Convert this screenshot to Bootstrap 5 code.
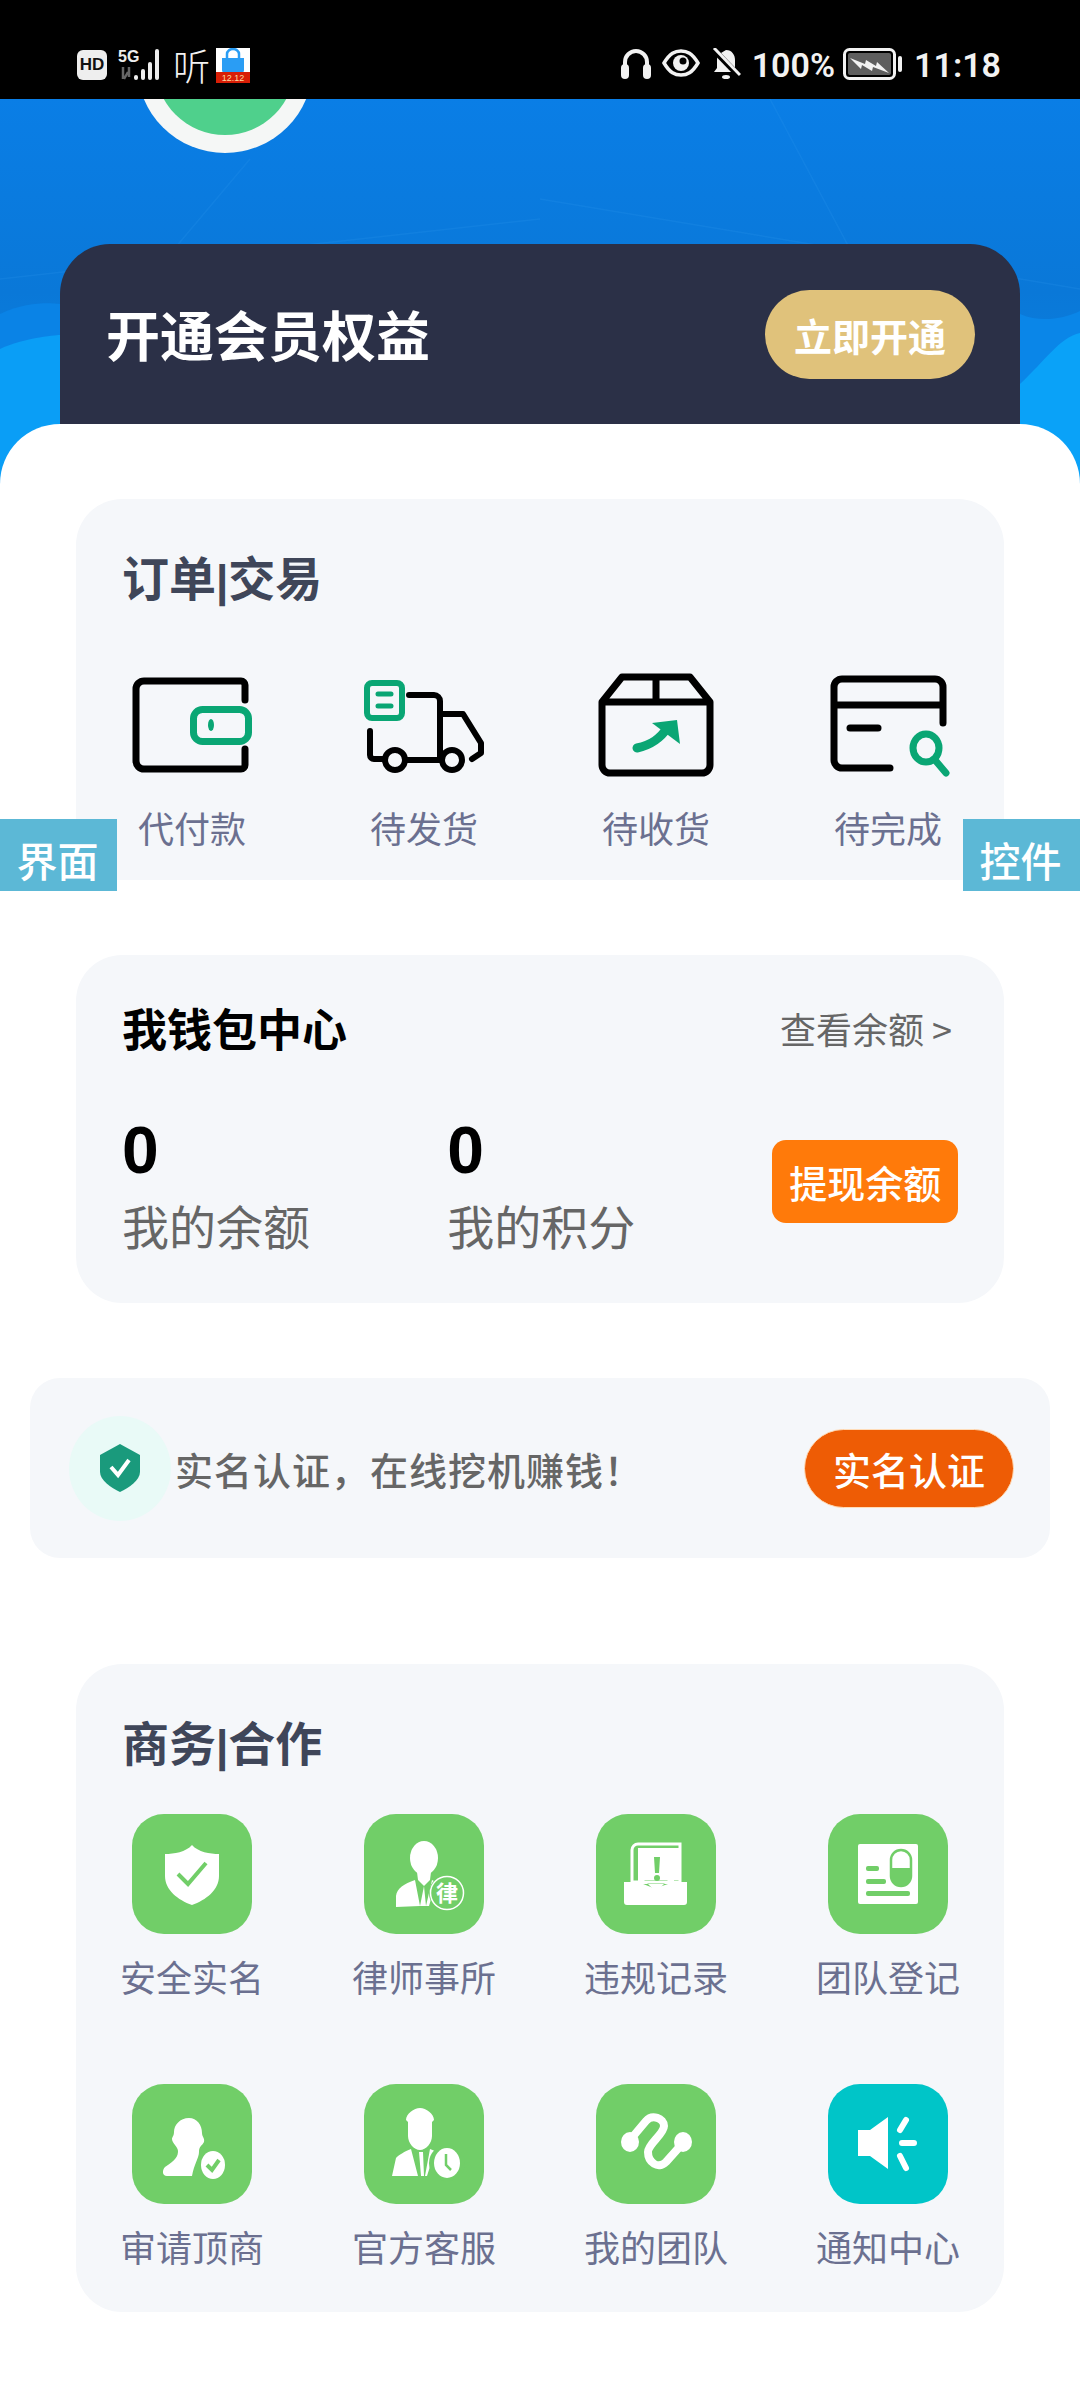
<!DOCTYPE html>
<html lang="zh-CN">
<head>
    <meta charset="UTF-8">
    <meta name="viewport" content="width=device-width, initial-scale=1.0">
    <title>会员中心</title>
    <link href="https://cdn.jsdelivr.net/npm/bootstrap@5.3.0/dist/css/bootstrap.min.css" rel="stylesheet">
    <style>
        body {
            width: 1080px;
            height: 2388px;
            overflow: hidden;
            position: relative;
            background: #fff;
            font-family: "Noto Sans CJK SC", "Noto Sans", sans-serif;
        }
        .status-bar {
            height: 99px;
            background: #000;
            color: #f2f2f2;
            padding: 48px 79px 0 77px;
            position: relative;
            z-index: 3;
        }
        .status-bar svg { display: block; }
        .hd-box {
            width: 30px; height: 30px; margin-top: 2px;
            background: #eee; color: #111; border-radius: 6px;
            font: 700 17px/30px "Liberation Sans", sans-serif; text-align: center;
        }
        .ting { font-size: 37px; line-height: 34px; font-weight: 300; margin-left: 8px; margin-right: 6px; }
        .status-num { font: 600 34px/32px Roboto, sans-serif; margin-top: 1px; }
        .st-gap { margin-left: 11px; }
        .hero {
            height: 385px;
            margin-bottom: -60px;
            padding: 145px 60px 0;
            position: relative;
            overflow: hidden;
            background: linear-gradient(180deg, #0a7ee6 0%, #0a78d8 50%, #0a86e4 100%);
        }
        .hero-bg { position: absolute; left: 0; top: 0; }
        .hero-avatar { position: absolute; left: 137px; top: -34px; }
        .vip-card {
            height: 260px;
            position: relative;
            background: #2b3047;
            border-radius: 50px 50px 0 0;
            padding: 46px 45px 0 46px;
        }
        .vip-title { font-size: 54px; line-height: 88px; font-weight: 700; color: #fff; }
        .btn.vip-btn {
            width: 210px; height: 89px; padding: 0;
            border: 0; border-radius: 45px;
            background: #e0c27b; color: #fff;
            font-size: 38px; font-weight: 700;
        }
        .sheet {
            height: 1964px;
            background: #fff;
            border-radius: 60px 60px 0 0;
            padding: 75px 76px 0;
            position: relative;
            z-index: 2;
        }
        .panel { background: #f5f7fa; border-radius: 46px; }
        .order-panel { height: 381px; padding-top: 47px; margin-bottom: 75px; border-radius: 46px 46px 12px 12px; }
        .panel-title { font-size: 47px; line-height: 60px; font-weight: 700; color: #3f4659; padding-left: 46px; }
        .title-bar { font-family: "Liberation Sans", sans-serif; font-weight: 700; font-size: 44px; }
        .order-row { margin-top: 62px; }
        .cell-label { font-size: 36px; color: #6b7090; line-height: 50px; }
        .order-label { margin-top: 25px; }
        .cell svg { display: block; margin: 0 auto; overflow: visible; }
        .wallet-panel { height: 348px; padding: 43px 46px 0; margin-bottom: 75px; }
        .wallet-title { font-size: 45px; line-height: 60px; font-weight: 700; color: #000; }
        .wallet-link { font-size: 36px; line-height: 60px; color: #666; margin-right: -2px; }
        .wallet-stats { margin-top: 54px; }
        .wallet-num { font-size: 66px; line-height: 76px; font-weight: 700; color: #000; font-family: "Liberation Sans", sans-serif; }
        .wallet-sub { font-size: 47px; line-height: 60px; color: #666; margin-top: 7px; }
        .wallet-stat { width: 326px; }
        .btn.cash-btn {
            width: 186px; height: 83px; padding: 0; margin-top: 28px;
            border: 0; border-radius: 14px;
            background: #ff7a0a; color: #fff;
            font-size: 38px; font-weight: 500;
        }
        .real-panel {
            height: 180px;
            margin: 0 -46px 106px;
            border-radius: 30px;
            padding: 0 36px 0 39px;
        }
        .shield-dot { width: 102px; height: 105px; border-radius: 50%; background: #e9faf7; flex-shrink: 0; }
        .real-text { font-size: 38px; color: #666; margin-left: 4px; font-weight: 500; letter-spacing: 1px; }
        .btn.real-btn {
            width: 210px; height: 79px; padding: 0;
            border: 1px solid #ffdcb8; border-radius: 40px;
            background: #ee5c05; color: #fff;
            font-size: 38px; font-weight: 500;
        }
        .biz-panel { height: 648px; padding-top: 47px; }
        .biz-row { margin-top: 38px; }
        .biz-row + .biz-row { margin-top: 81px; }
        .tile {
            width: 120px; height: 120px;
            margin: 0 auto 17px;
            border-radius: 32px;
            background: #71ce68;
        }
        .tile.tile-teal { background: #00c5c8; }
        .biz-row .cell-label { margin-bottom: 2px; }
        .side-tag {
            position: absolute; top: 819px; z-index: 4;
            width: 117px; height: 72px;
            background: #5cb8d6; color: #fff;
            font-size: 41px; font-weight: 500; line-height: 80px; text-align: center;
            padding-right: 2px;
        }
        .tag-left { left: 0; }
        .tag-right { right: 0; }
    </style>
</head>
<body>

    <div class="status-bar d-flex justify-content-between">
        <div class="d-flex align-items-start">
            <div class="hd-box">HD</div>
            <svg width="50" height="34" viewBox="0 0 50 34" class="ms-2">
                <text x="3" y="14" font-family="Liberation Sans" font-size="16" font-weight="700" fill="#eee">5G</text>
                <path d="M8 19v12M13 24l-4 7M14 19v10" stroke="#666" stroke-width="2.500" fill="none"/>
                <g fill="#eee">
                    <rect x="19" y="27" width="4" height="5" rx="2"/>
                    <rect x="26" y="21" width="4" height="11" rx="2"/>
                    <rect x="33" y="14" width="4" height="18" rx="2"/>
                    <rect x="40" y="1" width="4" height="31" rx="2"/>
                </g>
            </svg>
            <div class="ting">听</div>
            <svg width="34" height="35" viewBox="0 0 34 35">
                <rect width="34" height="25" fill="#fff"/>
                <path d="M6 10h22v12a3 3 0 0 1-3 3H9a3 3 0 0 1-3-3z" fill="#2a9df4"/>
                <path d="M11 10V6a6 5 0 0 1 12 0v4" stroke="#2a9df4" stroke-width="2.500" fill="none"/>
                <rect y="24" width="34" height="11" fill="#d81e06"/>
                <text x="17" y="33" font-family="Liberation Sans" font-size="9" fill="#ffd9a0" text-anchor="middle">12.12</text>
            </svg>
        </div>
        <div class="d-flex align-items-start">
            <svg width="30" height="31" viewBox="0 0 30 31">
                <path d="M4 20V14a11 11 0 0 1 22 0v6" stroke="#f2f2f2" stroke-width="4" fill="none"/>
                <rect x="0" y="16" width="8" height="15" rx="4" fill="#f2f2f2"/>
                <rect x="22" y="16" width="8" height="15" rx="4" fill="#f2f2f2"/>
            </svg>
            <svg width="38" height="30" viewBox="0 0 38 30" class="st-gap">
                <path d="M2 15C8 5 13 3 19 3s11 2 17 12c-6 10-11 12-17 12S8 25 2 15z" stroke="#f2f2f2" stroke-width="3.500" fill="none"/>
                <circle cx="19" cy="15" r="8" fill="#f2f2f2"/>
                <circle cx="21" cy="13" r="3.500" fill="#000"/>
            </svg>
            <svg width="30" height="32" viewBox="0 0 30 32" class="st-gap">
                <path d="M15 2c6 0 9 5 9 10v8l3 4H3l3-4v-8c0-2 .6-4 1.500-5.500z" fill="#f2f2f2"/>
                <path d="M2 1l26 27" stroke="#000" stroke-width="6"/>
                <path d="M3 0l26 27" stroke="#f2f2f2" stroke-width="3"/>
                <ellipse cx="15" cy="29" rx="4" ry="2" fill="#f2f2f2"/>
            </svg>
            <div class="status-num st-gap">100%</div>
            <svg width="60" height="32" viewBox="0 0 60 32" class="ms-2">
                <rect x="1.500" y="1.500" width="50" height="29" rx="5" stroke="#f2f2f2" stroke-width="3" fill="none"/>
                <rect x="5" y="5" width="43" height="22" rx="2" fill="#5e5e5e"/>
                <path d="M7 10l15 6 1-4 10 6 1-4 12 11-16-6-1 4-10-6-1 4z" fill="#f2f2f2"/>
                <rect x="55" y="8" width="4" height="16" rx="2" fill="#f2f2f2"/>
            </svg>
            <div class="status-num st-gap">11:18</div>
        </div>
    </div>

    <div class="hero">
        <svg class="hero-bg" width="1080" height="385" viewBox="0 0 1080 385">
            <g stroke="#2f97ec" stroke-width="1.500" fill="none" opacity=".22">
                <path d="M250 60L90 250M770 0L900 244M540 100L1080 190M0 180L540 120"/>
            </g>
            <path d="M0 215C30 200 60 205 60 205V385H0z" fill="#0a83e6"/>
            <path d="M0 250C25 238 60 236 60 236V385H0z" fill="#0a9ef6"/>
            <path d="M1020 215C1050 228 1080 212 1080 212V385H1020z" fill="#0a86e8"/>
            <path d="M1020 285C1045 262 1060 238 1080 234V385H1020z" fill="#0aa2f8"/>
        </svg>
        <svg class="hero-avatar" width="176" height="90" viewBox="0 0 176 90" >
            <circle cx="88" cy="0" r="88" fill="#f5f7f6"/>
            <circle cx="88" cy="0" r="70" fill="#4fd08c"/>
            <path d="M55 0h66v3h-4v8h-14v-4H73v4H59V3h-4z" fill="#fff"/>
        </svg>
        <div class="vip-card d-flex justify-content-between align-items-start">
            <div class="vip-title">开通会员权益</div>
            <button class="btn vip-btn">立即开通</button>
        </div>
    </div>

    <div class="sheet">
        <div class="panel order-panel">
            <div class="panel-title">订单<span class="title-bar">|</span>交易</div>
            <div class="row g-0 order-row text-center">
                <div class="col-3 cell">
                    <svg width="120" height="104" viewBox="0 0 120 104" fill="none">
                        <path d="M113 27V12a4 4 0 0 0-4-4H12a8 8 0 0 0-8 8v72a8 8 0 0 0 8 8h97a4 4 0 0 0 4-4V76" stroke="#000" stroke-width="7" stroke-linecap="round"/>
                        <rect x="61.500" y="36.500" width="55" height="32" rx="9" stroke="#0aa674" stroke-width="7"/>
                        <ellipse cx="79" cy="52" rx="3" ry="6" fill="#0aa674"/>
                    </svg>
                    <div class="cell-label order-label">代付款</div>
                </div>
                <div class="col-3 cell">
                    <svg width="120" height="104" viewBox="0 0 120 104" fill="none">
                        <path d="M45 22H70a6 6 0 0 1 6 6V86M6 58V82a4 4 0 0 0 4 4H20M41 87H78M76 41H99L117 70V80L108 86" stroke="#000" stroke-width="6" stroke-linecap="round" stroke-linejoin="round"/>
                        <circle cx="31" cy="87" r="10" stroke="#000" stroke-width="6"/>
                        <circle cx="88" cy="87" r="10" stroke="#000" stroke-width="6"/>
                        <rect x="3" y="10" width="35" height="35" rx="5" stroke="#0aa674" stroke-width="6"/>
                        <path d="M14 21H27M14 33H27" stroke="#0aa674" stroke-width="5" stroke-linecap="round"/>
                    </svg>
                    <div class="cell-label order-label">待发货</div>
                </div>
                <div class="col-3 cell">
                    <svg width="120" height="104" viewBox="0 0 120 104" fill="none">
                        <path d="M6 29V92a8 8 0 0 0 8 8H106a8 8 0 0 0 8-8V29L94 4H26zM6 29H114M60 4V29" stroke="#000" stroke-width="7" stroke-linejoin="round"/>
                        <path d="M41 75C55 72 64 66 72 54" stroke="#0aa674" stroke-width="9" stroke-linecap="round"/>
                        <path d="M56 50L81 47L84 71z" fill="#0aa674"/>
                    </svg>
                    <div class="cell-label order-label">待收货</div>
                </div>
                <div class="col-3 cell">
                    <svg width="120" height="104" viewBox="0 0 120 104" fill="none">
                        <path d="M115 50V14a8 8 0 0 0-8-8H14a8 8 0 0 0-8 8V87a8 8 0 0 0 8 8H62M6 32H115" stroke="#000" stroke-width="7" stroke-linecap="round"/>
                        <path d="M22 55H50" stroke="#000" stroke-width="7" stroke-linecap="round"/>
                        <ellipse cx="98" cy="75" rx="13" ry="14" stroke="#0aa674" stroke-width="7"/>
                        <path d="M107 87L118 100" stroke="#0aa674" stroke-width="7" stroke-linecap="round"/>
                    </svg>
                    <div class="cell-label order-label">待完成</div>
                </div>
            </div>
        </div>

        <div class="panel wallet-panel">
            <div class="d-flex justify-content-between">
                <div class="wallet-title">我钱包中心</div>
                <div class="wallet-link pe-2">查看余额 &gt;</div>
            </div>
            <div class="d-flex wallet-stats">
                <div class="wallet-stat">
                    <div class="wallet-num">0</div>
                    <div class="wallet-sub">我的余额</div>
                </div>
                <div class="wallet-stat">
                    <div class="wallet-num">0</div>
                    <div class="wallet-sub">我的积分</div>
                </div>
                <button class="btn cash-btn">提现余额</button>
            </div>
        </div>

        <div class="panel real-panel d-flex align-items-center">
            <div class="shield-dot d-flex align-items-center justify-content-center">
                <svg width="42" height="48" viewBox="0 0 42 48">
                    <path d="M21 0L41 11V28C41 36 30 44 21 48C12 44 1 36 1 28V11z" fill="#1a9a7c"/>
                    <path d="M12 23L19 31L30 16" stroke="#fff" stroke-width="4" fill="none"/>
                </svg>
            </div>
            <div class="real-text flex-grow-1">实名认证，在线挖机赚钱！</div>
            <button class="btn real-btn">实名认证</button>
        </div>

        <div class="panel biz-panel">
            <div class="panel-title">商务<span class="title-bar">|</span>合作</div>
            <div class="row g-0 biz-row text-center">
                <div class="col-3 cell">
                    <div class="tile d-flex">
                        <svg width="120" height="120" viewBox="0 0 120 120">
                            <path d="M60 31C66 38 78 40 87 40V62C87 76 74 86 60 91C46 86 33 76 33 62V40C42 40 54 38 60 31z" fill="#fff"/>
                            <path d="M46 60L56 70L74 49" stroke="#71ce68" stroke-width="4" fill="none"/>
                        </svg>
                    </div>
                    <div class="cell-label">安全实名</div>
                </div>
                <div class="col-3 cell">
                    <div class="tile d-flex">
                        <svg width="120" height="120" viewBox="0 0 120 120">
                            <ellipse cx="60" cy="44" rx="14" ry="17" fill="#fff"/>
                            <path d="M53 58H67L66 66L60 72L54 66z" fill="#fff"/>
                            <path d="M32 93V82C33 74 40 70 51 66L56 92zM60 72L62 92H56zM68 66L72 68L65 92H62z" fill="#fff"/>
                            <circle cx="83" cy="79" r="18" fill="#71ce68"/>
                            <circle cx="83" cy="79" r="16.500" fill="none" stroke="#fff" stroke-width="1.500"/>
                            <text x="83" y="87" font-size="22" font-weight="700" fill="#fff" text-anchor="middle" font-family="Noto Sans CJK SC">律</text>
                        </svg>
                    </div>
                    <div class="cell-label">律师事所</div>
                </div>
                <div class="col-3 cell">
                    <div class="tile d-flex">
                        <svg width="120" height="120" viewBox="0 0 120 120">
                            <path d="M36 62V36a6 6 0 0 1 6-6H84V68H36z" fill="none" stroke="#fff" stroke-width="3"/>
                            <path d="M42 34H84V66H42z" fill="#fff"/>
                            <path d="M28 68H42L60 75L60 74L78 68H91V88a3 3 0 0 1-3 3H31a3 3 0 0 1-3-3z" fill="#fff"/>
                            <path d="M42 60L60 78L78 60V70H42z" fill="#fff"/>
                            <path d="M58 43H64L63 59H59z" fill="#71ce68"/>
                            <circle cx="61" cy="64" r="3" fill="#71ce68"/>
                        </svg>
                    </div>
                    <div class="cell-label">违规记录</div>
                </div>
                <div class="col-3 cell">
                    <div class="tile d-flex">
                        <svg width="120" height="120" viewBox="0 0 120 120">
                            <rect x="30" y="30" width="60" height="60" rx="2" fill="#fff"/>
                            <rect x="63" y="36" width="20" height="36" rx="10" fill="none" stroke="#71ce68" stroke-width="2.500"/>
                            <path d="M63 54V62a10 10 0 0 0 20 0V54z" fill="#71ce68"/>
                            <rect x="38" y="52" width="13" height="5" rx="2" fill="#71ce68"/>
                            <rect x="38" y="65" width="20" height="5" rx="2" fill="#71ce68"/>
                            <rect x="38" y="77" width="44" height="5" rx="2" fill="#71ce68"/>
                        </svg>
                    </div>
                    <div class="cell-label">团队登记</div>
                </div>
            </div>
            <div class="row g-0 biz-row text-center">
                <div class="col-3 cell">
                    <div class="tile d-flex">
                        <svg width="120" height="120" viewBox="0 0 120 120">
                            <path d="M57 34C65 34 70 41 70 49C70 53 73 54 72 58C70 62 67 62 67 68C67 74 62 80 60 92H35C30 92 30 86 33 83C44 76 46 72 46 67C46 63 40 59 40 55C40 53 42 52 42 48C42 41 48 34 57 34z" fill="#fff"/>
                            <ellipse cx="81" cy="81" rx="12" ry="14" fill="#fff"/>
                            <path d="M75 81L80 86L87 76" stroke="#71ce68" stroke-width="4" fill="none"/>
                        </svg>
                    </div>
                    <div class="cell-label">审请顶商</div>
                </div>
                <div class="col-3 cell">
                    <div class="tile d-flex">
                        <svg width="120" height="120" viewBox="0 0 120 120">
                            <path d="M56 24C62 24 70 30 70 36L68 38V52C68 59 62 66 56 66C50 66 44 59 44 52V38L42 36C42 30 50 24 56 24z" fill="#fff"/>
                            <path d="M28 92L32 74C36 70 40 68 47 65L54 92zM57 92L55 68H59L60 92zM66 65L71 67L63 92H61z" fill="#fff"/>
                            <circle cx="83" cy="79" r="18" fill="#71ce68"/>
                            <ellipse cx="83" cy="79" rx="13" ry="15" fill="#fff"/>
                            <path d="M82 70V81L87 86" stroke="#71ce68" stroke-width="2.500" fill="none"/>
                        </svg>
                    </div>
                    <div class="cell-label">官方客服</div>
                </div>
                <div class="col-3 cell">
                    <div class="tile d-flex">
                        <svg width="120" height="120" viewBox="0 0 120 120">
                            <path d="M34 56L50 37C56 30 68 34 68 42C68 50 52 60 52 68C52 78 62 86 70 78L87 59" stroke="#fff" stroke-width="8" fill="none" stroke-linecap="round" stroke-linejoin="round"/>
                            <ellipse cx="34" cy="58" rx="9" ry="10" fill="#fff"/>
                            <ellipse cx="87" cy="58" rx="9" ry="10" fill="#fff"/>
                        </svg>
                    </div>
                    <div class="cell-label">我的团队</div>
                </div>
                <div class="col-3 cell">
                    <div class="tile tile-teal d-flex">
                        <svg width="120" height="120" viewBox="0 0 120 120">
                            <path d="M30 46H42L60 33V85L42 72H30z" fill="#fff"/>
                            <path d="M72 46L78 36M74 59H86M72 72L78 84" stroke="#fff" stroke-width="6" fill="none" stroke-linecap="round"/>
                        </svg>
                    </div>
                    <div class="cell-label">通知中心</div>
                </div>
            </div>
        </div>
    </div>

    <div class="side-tag tag-left">界面</div>
    <div class="side-tag tag-right">控件</div>

</body>
</html>
